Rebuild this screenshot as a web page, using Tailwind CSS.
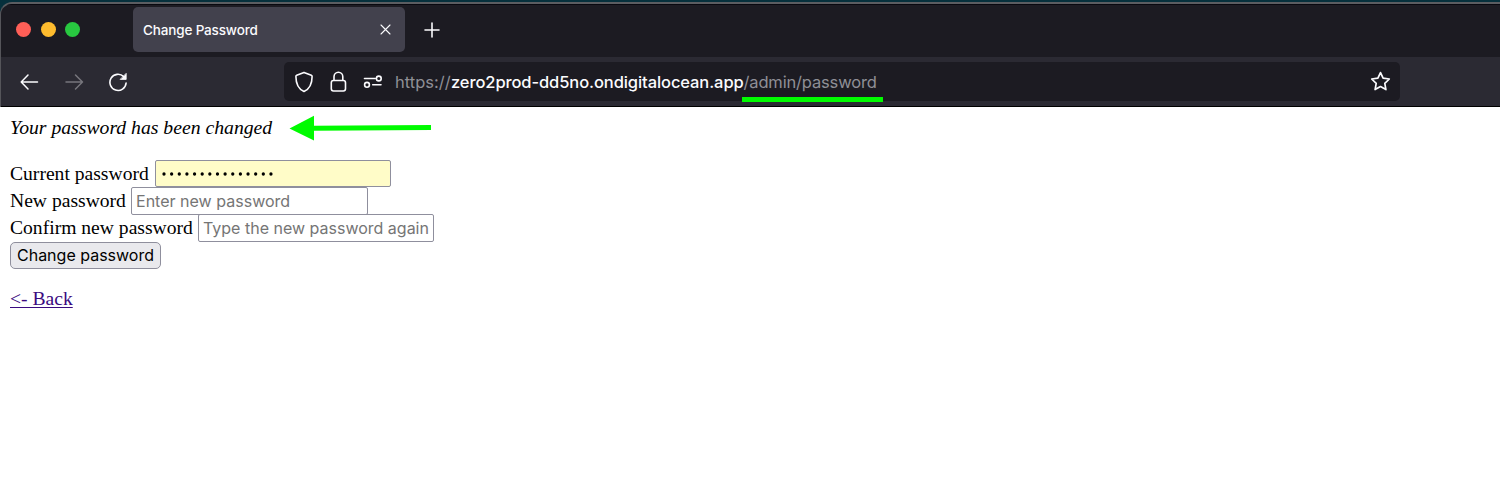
<!DOCTYPE html>
<html lang="en">
<head>
<meta charset="utf-8">
<title>Change Password</title>
<script src="https://cdn.jsdelivr.net/npm/@tailwindcss/browser@4"></script>
</head>
<body class="w-[1500px] h-[488px] overflow-hidden bg-white">
<div class="bg-[#06303c] pt-[2px] h-[107px]">
  <header class="h-[105px] rounded-tl-[12px] border-t-2 border-l border-t-[#5b5d61] border-l-[#55555a] bg-[#1c1b22] overflow-hidden font-['Inter',sans-serif]">
    <div class="h-[53px] border-t border-[#08080f] flex items-start pl-[15px]">
      <div class="flex gap-[9.5px] pt-[17px]">
        <span class="size-[15px] rounded-full bg-[#ff5f57]"></span>
        <span class="size-[15px] rounded-full bg-[#febc2e]"></span>
        <span class="size-[15px] rounded-full bg-[#28c840]"></span>
      </div>
      <div class="ml-[53px] mt-[2px] w-[272px] h-[45px] rounded-[5px] bg-[#42414d] flex items-center justify-between pl-[10px] pr-[14px] text-[#fbfbfe]">
        <span class="pt-[2px] text-[13.500px] font-medium tracking-[-0.150px] whitespace-nowrap">Change Password</span>
        <svg class="size-[11px]" viewBox="0 0 11 11" fill="none" stroke="currentColor" stroke-width="1.1" stroke-linecap="round"><path d="M1 1l9 9M10 1l-9 9"/></svg>
      </div>
      <svg class="ml-[19px] mt-[17px] size-[16px]" viewBox="0 0 16 16" fill="none" stroke="#fbfbfe" stroke-width="1.6" stroke-linecap="round"><path d="M8 1v14M1 8h14"/></svg>
    </div>
    <div class="h-[50px] bg-[#2b2a33] border-b border-black flex items-center">
      <svg class="ml-[19px] w-[20px] h-[18px]" viewBox="0 0 20 18" fill="none" stroke="#fbfbfe" stroke-width="1.5" stroke-linecap="round" stroke-linejoin="round"><path d="M17.500 9H1.200M8 2L1.200 9 8 16"/></svg>
      <svg class="ml-[25px] w-[20px] h-[18px]" viewBox="0 0 20 18" fill="none" stroke="#77767d" stroke-width="1.500" stroke-linecap="round" stroke-linejoin="round"><path d="M1 9h16.500M10.500 2l7 7-7 7"/></svg>
      <svg class="ml-[23px] size-[20px]" viewBox="0 0 20 20" fill="none" stroke="#fbfbfe" stroke-width="1.600" stroke-linecap="round"><path d="M15.700 4.600A8.100 8.100 0 1 0 18.100 11"/><path d="M18.200 1.700v5.700h-5.700z" fill="#fbfbfe" stroke-width=".8" stroke-linejoin="round"/></svg>
      <div class="ml-[156px] w-[1116px] h-[39px] rounded-[5px] bg-[#1c1b22] flex items-center">
        <svg class="ml-[10px] w-[20px] h-[22px]" viewBox="0 0 20 22" fill="none" stroke="#fbfbfe" stroke-width="1.600" stroke-linejoin="round"><path d="M10 1.400l7.300 2.800q.8.300.8 1.200C18.100 12.500 16.500 17.500 10 20.400 3.500 17.500 1.900 12.500 1.900 5.400q0-.9.800-1.200z"/></svg>
        <svg class="ml-[15px] w-[18px] h-[22px]" viewBox="0 0 18 22" fill="none" stroke="#fbfbfe" stroke-width="1.600"><rect x="2.300" y="9.500" width="14.200" height="10.500" rx="2.200"/><path d="M5 9.500V5.700a4.400 4.400 0 0 1 8.800 0v3.800"/></svg>
        <svg class="ml-[16px] w-[20px] h-[14px]" viewBox="0 0 20 14" fill="none" stroke="#fbfbfe" stroke-width="1.600" stroke-linecap="round"><path d="M1.500 3.500h10.700M9.700 9.800h8.300"/><circle cx="15.800" cy="3.500" r="2.400"/><circle cx="4" cy="9.800" r="2.400"/></svg>
        <div class="ml-[12px] pt-[2px] text-[16.500px] whitespace-nowrap text-[#8f8f96] flex"><span class="w-[56px]">https://</span><span class="w-[292.500px] tracking-[-0.090px] font-medium text-[#fbfbfe]">zero2prod-dd5no.ondigitalocean.app</span><span class="tracking-[-0.16px]">/admin/password</span></div>
        <svg class="ml-auto mr-[9px] size-[21px]" viewBox="0 0 21 21" fill="none" stroke="#fbfbfe" stroke-width="1.700" stroke-linejoin="round"><path d="M10.500 1.600l2.600 5.600 6.200.8-4.500 4.300 1.100 6.300-5.400-3-5.400 3 1.100-6.300L1.700 8l6.200-.8z"/></svg>
      </div>
    </div>
  </header>
</div>
<main class="pl-[10px] pt-[7px] font-['Liberation_Serif',serif] text-[19.600px] leading-[27px] text-black whitespace-nowrap">
  <p class="h-[26px] leading-[26px] text-[19.700px]"><i>Your password has been changed</i></p>
  <form class="mt-[20px]">
    <div class="flex h-[27px]"><span class="w-[144.500px]">Current password</span><div class="w-[236.500px] h-[27px] border border-[#8f8f9d] rounded-[2px] bg-[#fffcc8] flex items-center pl-[6px]">
      <svg class="w-[113px] h-[4px]" viewBox="0 0 113 4"><path d="M2 2h112" stroke="#000" stroke-width="3.300" stroke-linecap="round" stroke-dasharray="0 7.640"/></svg></div></div>
    <div class="flex h-[27px]"><span class="w-[121px]">New password</span><div class="w-[237px] h-[27.500px] border border-[#8f8f9d] rounded-[2px] pl-[4px] leading-[27px] font-['Inter',sans-serif] text-[16.050px] text-[#757575]">Enter new password</div></div>
    <div class="flex h-[27px]"><span class="w-[188px]">Confirm new password</span><div class="w-[236px] h-[27.500px] border border-[#8f8f9d] rounded-[2px] pl-[4px] leading-[27px] font-['Inter',sans-serif] text-[16px] text-[#757575]">Type the new password again</div></div>
    <button type="button" class="block mt-[0.500px] w-[151px] h-[27px] rounded-[5px] border border-[#8f8f9d] bg-[#e9e9ed] font-['Inter',sans-serif] text-[16px] leading-[24px]">Change password</button>
  </form>
  <p class="mt-[16.500px]"><a class="text-[#3b0a80] underline underline-offset-2 decoration-1" href="#">&lt;- Back</a></p>
</main>
<div class="absolute left-[742px] top-[97px] w-[141px] h-[5px] bg-[#00fb00]"></div>
<svg class="absolute left-[289px] top-[115px] w-[143px] h-[26px]" viewBox="0 0 143 26" fill="#00fb00"><path d="M.5 13.500L25 .7v10.100L142 10v5L25 15.800v9.700z"/></svg>
</body>
</html>
